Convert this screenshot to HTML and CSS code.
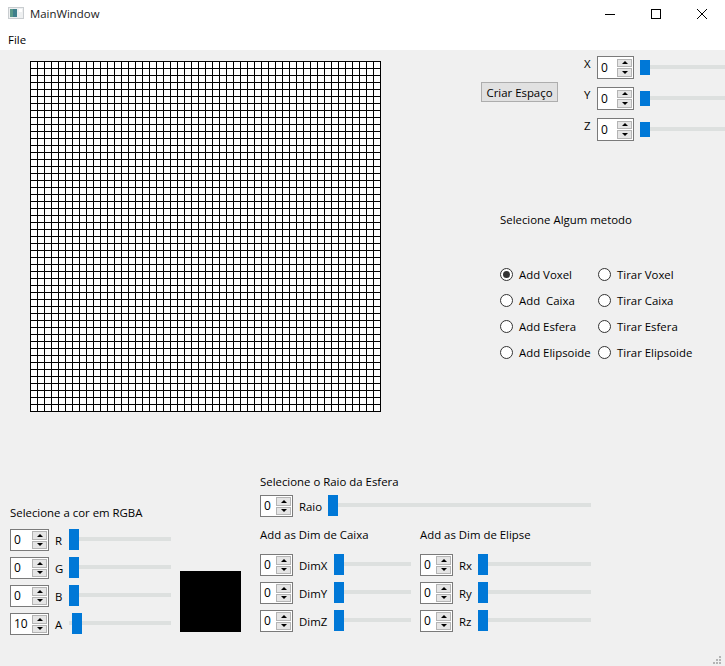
FILE: index.html
```html
<!DOCTYPE html>
<html>
<head>
  <title>MainWindow</title>
  <link rel="stylesheet" href="styles.css">
</head>
<body>
  <div class="window">
    <div class="titlebar">
      <svg class="app-icon" width="16" height="12" viewBox="0 0 16 12">
        <rect x="0" y="0" width="16" height="12" fill="#c9cdd0"/>
        <rect x="1" y="1" width="14" height="10" fill="#eef0f1"/>
        <rect x="2" y="2" width="7" height="8" fill="#3f7f8c"/>
        <rect x="2" y="2" width="3" height="8" fill="#5b9a8a"/>
        <rect x="11" y="2" width="3" height="3" fill="#fff"/>
      </svg>
      <span class="title">MainWindow</span>
      <div class="win-buttons">
        <svg width="12" height="12" viewBox="0 0 12 12"><path d="M1 6.5h10" stroke="#000" fill="none"/></svg>
        <svg width="12" height="12" viewBox="0 0 12 12"><rect x="1.5" y="1.5" width="9" height="9" stroke="#000" fill="none"/></svg>
        <svg width="12" height="12" viewBox="0 0 12 12"><path d="M1 1l10 10M11 1L1 11" stroke="#000" fill="none"/></svg>
      </div>
    </div>
    <div class="menubar"><span>File</span></div>

    <div class="content">
      <div class="upper">
        <div class="canvas"></div>
        <div class="side">
          <div class="space">
            <button class="btn">Criar Espaço</button>
            <div class="axes">
              <div class="axis">
                <span class="axis-label">X</span>
                <div class="spin spin-axis"><span class="val">0</span><span class="arrows"><i class="up"></i><i class="down"></i></span></div>
                <div class="slider slider-axis"><i class="thumb"></i></div>
              </div>
              <div class="axis">
                <span class="axis-label">Y</span>
                <div class="spin spin-axis"><span class="val">0</span><span class="arrows"><i class="up"></i><i class="down"></i></span></div>
                <div class="slider slider-axis"><i class="thumb"></i></div>
              </div>
              <div class="axis">
                <span class="axis-label">Z</span>
                <div class="spin spin-axis"><span class="val">0</span><span class="arrows"><i class="up"></i><i class="down"></i></span></div>
                <div class="slider slider-axis"><i class="thumb"></i></div>
              </div>
            </div>
          </div>
          <div class="methods">
            <p class="methods-title">Selecione Algum metodo</p>
            <div class="radios">
              <label class="radio"><i class="dot checked"></i>Add Voxel</label>
              <label class="radio"><i class="dot"></i>Tirar Voxel</label>
              <label class="radio"><i class="dot"></i>Add&nbsp; Caixa</label>
              <label class="radio"><i class="dot"></i>Tirar Caixa</label>
              <label class="radio"><i class="dot"></i>Add Esfera</label>
              <label class="radio"><i class="dot"></i>Tirar Esfera</label>
              <label class="radio"><i class="dot"></i>Add Elipsoide</label>
              <label class="radio"><i class="dot"></i>Tirar Elipsoide</label>
            </div>
          </div>
        </div>
      </div>

      <div class="lower">
        <div class="color-panel">
          <p class="heading">Selecione a cor em RGBA</p>
          <div class="color-body">
            <div class="rows">
              <div class="row">
                <div class="spin spin-color"><span class="val">0</span><span class="arrows"><i class="up"></i><i class="down"></i></span></div>
                <span class="row-label label-color">R</span>
                <div class="slider slider-color"><i class="thumb"></i></div>
              </div>
              <div class="row">
                <div class="spin spin-color"><span class="val">0</span><span class="arrows"><i class="up"></i><i class="down"></i></span></div>
                <span class="row-label label-color">G</span>
                <div class="slider slider-color"><i class="thumb"></i></div>
              </div>
              <div class="row">
                <div class="spin spin-color"><span class="val">0</span><span class="arrows"><i class="up"></i><i class="down"></i></span></div>
                <span class="row-label label-color">B</span>
                <div class="slider slider-color"><i class="thumb"></i></div>
              </div>
              <div class="row">
                <div class="spin spin-color"><span class="val">10</span><span class="arrows"><i class="up"></i><i class="down"></i></span></div>
                <span class="row-label label-color">A</span>
                <div class="slider slider-color"><i class="thumb thumb-alpha"></i></div>
              </div>
            </div>
            <div class="swatch"></div>
          </div>
        </div>

        <div class="shape-panel">
          <p class="heading">Selecione o Raio da Esfera</p>
          <div class="row row-raio">
            <div class="spin"><span class="val">0</span><span class="arrows"><i class="up"></i><i class="down"></i></span></div>
            <span class="row-label label-raio">Raio</span>
            <div class="slider slider-raio"><i class="thumb"></i></div>
          </div>
          <div class="dims">
            <div class="dim-group">
              <p class="heading">Add as Dim de Caixa</p>
              <div class="rows">
                <div class="row">
                  <div class="spin"><span class="val">0</span><span class="arrows"><i class="up"></i><i class="down"></i></span></div>
                  <span class="row-label label-dim">DimX</span>
                  <div class="slider slider-dim"><i class="thumb"></i></div>
                </div>
                <div class="row">
                  <div class="spin"><span class="val">0</span><span class="arrows"><i class="up"></i><i class="down"></i></span></div>
                  <span class="row-label label-dim">DimY</span>
                  <div class="slider slider-dim"><i class="thumb"></i></div>
                </div>
                <div class="row">
                  <div class="spin"><span class="val">0</span><span class="arrows"><i class="up"></i><i class="down"></i></span></div>
                  <span class="row-label label-dim">DimZ</span>
                  <div class="slider slider-dim"><i class="thumb"></i></div>
                </div>
              </div>
            </div>
            <div class="dim-group">
              <p class="heading">Add as Dim de Elipse</p>
              <div class="rows">
                <div class="row">
                  <div class="spin"><span class="val">0</span><span class="arrows"><i class="up"></i><i class="down"></i></span></div>
                  <span class="row-label label-el">Rx</span>
                  <div class="slider slider-el"><i class="thumb"></i></div>
                </div>
                <div class="row">
                  <div class="spin"><span class="val">0</span><span class="arrows"><i class="up"></i><i class="down"></i></span></div>
                  <span class="row-label label-el">Ry</span>
                  <div class="slider slider-el"><i class="thumb"></i></div>
                </div>
                <div class="row">
                  <div class="spin"><span class="val">0</span><span class="arrows"><i class="up"></i><i class="down"></i></span></div>
                  <span class="row-label label-el">Rz</span>
                  <div class="slider slider-el"><i class="thumb"></i></div>
                </div>
              </div>
            </div>
          </div>
        </div>
      </div>

      <svg class="grip" width="9" height="9" viewBox="0 0 9 9" fill="#b4b4b4">
        <rect x="6" y="0" width="2" height="2"/>
        <rect x="3" y="3" width="2" height="2"/>
        <rect x="6" y="3" width="2" height="2"/>
        <rect x="0" y="6" width="2" height="2"/>
        <rect x="3" y="6" width="2" height="2"/>
        <rect x="6" y="6" width="2" height="2"/>
      </svg>
    </div>
  </div>
</body>
</html>
```

FILE: styles.css
```css
* {
  box-sizing: border-box;
}
html, body {
  margin: 0;
  padding: 0;
}
body {
  font-family: "Open Sans", sans-serif;
  font-size: 11.4px;
  color: #000;
  background: #f0f0f0;
}
p {
  margin: 0;
}
.window {
  width: 725px;
  height: 666px;
  display: flex;
  flex-direction: column;
  overflow: hidden;
}

/* title bar and menu */
.titlebar {
  height: 30px;
  background: #fff;
  display: flex;
  align-items: center;
  padding-left: 8px;
}
.app-icon {
  margin-top: -4px;
}
.title {
  margin-left: 6px;
  margin-top: -3px;
  color: #1a1a1a;
}
.win-buttons {
  margin-left: auto;
  margin-right: 17px;
  margin-top: -3px;
  display: flex;
  gap: 34px;
}
.menubar {
  height: 20px;
  background: #fff;
  padding: 2px 0 0 8px;
}

.content {
  flex: 1;
  display: flex;
  flex-direction: column;
  position: relative;
}

/* top part */
.upper {
  height: 424px;
  display: flex;
  align-items: flex-start;
}
.canvas {
  width: 351px;
  height: 351px;
  margin: 11px 0 0 30px;
  background-color: #fff;
  background-image:
    linear-gradient(to right, #000 1px, transparent 1px),
    linear-gradient(to bottom, #000 1px, transparent 1px);
  background-size: 7px 7px;
}
.side {
  flex: 1;
  min-width: 0;
}
.space {
  display: flex;
  align-items: flex-start;
}
.btn {
  width: 77px;
  height: 20px;
  margin: 32px 0 0 100px;
  padding: 0;
  font: inherit;
  color: #000;
  background: #e1e1e1;
  border: 1px solid #adadad;
}
.axes {
  flex: 1;
  min-width: 0;
  margin-left: 26px;
  padding-top: 6px;
  display: flex;
  flex-direction: column;
  gap: 8px;
}
.axis {
  display: flex;
  align-items: flex-start;
}
.axis-label {
  width: 13px;
}

/* spin boxes */
.spin {
  width: 33px;
  height: 22px;
  flex: none;
  display: flex;
  justify-content: space-between;
  align-items: center;
  padding: 1px 1px 1px 3px;
  background: #fff;
  border: 1px solid #7a7a7a;
}
.spin-axis {
  width: 37px;
  height: 23px;
}
.spin-color {
  width: 39px;
}
.val {
  line-height: 1;
  font-size: 12px;
}
.arrows {
  width: 15px;
  height: 18px;
  display: flex;
  flex-direction: column;
  gap: 1px;
}
.arrows i {
  flex: 1;
  display: flex;
  align-items: center;
  justify-content: center;
  background: #e5e5e5;
  border: 1px solid #b4b4b4;
}
.arrows i::after {
  content: "";
  border-left: 3px solid transparent;
  border-right: 3px solid transparent;
}
.arrows .up::after {
  border-bottom: 3px solid #000;
}
.arrows .down::after {
  border-top: 3px solid #000;
}

/* sliders */
.slider {
  flex: none;
  align-self: flex-start;
  height: 21px;
  background: linear-gradient(#dde0df, #dde0df) 0 8px / 100% 4px no-repeat;
}
.thumb {
  display: block;
  width: 10px;
  height: 21px;
  background: #0078d7;
}
.slider-axis {
  flex: 1;
  height: 15px;
  margin: 4px 0 0 6px;
  background-position: 0 5px;
}
.slider-axis .thumb {
  height: 15px;
}
.slider-color {
  width: 102px;
}
.thumb-alpha {
  margin-left: 3px;
}
.slider-raio {
  width: 263px;
}
.slider-dim {
  width: 77px;
}
.slider-el {
  width: 113px;
}

/* radio buttons */
.methods {
  margin-top: 71px;
  padding-left: 119px;
}
.methods-title {
  height: 16px;
  line-height: 16px;
}
.radios {
  margin-top: 33px;
  display: grid;
  grid-template-columns: 98px 1fr;
  grid-auto-rows: 26px;
}
.radio {
  display: flex;
  align-items: center;
  gap: 6px;
  white-space: nowrap;
}
.dot {
  width: 13px;
  height: 13px;
  flex: none;
  display: flex;
  align-items: center;
  justify-content: center;
  background: #fff;
  border: 1px solid #333;
  border-radius: 50%;
}
.dot.checked::after {
  content: "";
  width: 7px;
  height: 7px;
  background: #333;
  border-radius: 50%;
}

/* bottom part */
.lower {
  display: flex;
  align-items: flex-start;
}
.heading {
  height: 16px;
  line-height: 16px;
}
.color-panel {
  width: 250px;
  margin: 31px 0 0 10px;
}
.color-body {
  display: flex;
  align-items: flex-end;
  margin-top: 8px;
}
.rows {
  display: flex;
  flex-direction: column;
  gap: 6px;
}
.row {
  display: flex;
  align-items: center;
  height: 22px;
}
.row-label {
  flex: none;
  margin-left: 6px;
}
.label-color {
  width: 14px;
}
.label-raio {
  width: 29px;
}
.label-dim {
  width: 35px;
}
.label-el {
  width: 19px;
}
.swatch {
  width: 61px;
  height: 61px;
  margin: 0 0 3px 9px;
  background: #000;
}
.shape-panel {
  flex: 1;
}
.row-raio {
  margin-top: 5px;
}
.dims {
  display: flex;
  margin-top: 10px;
}
.dim-group {
  flex: none;
  width: 160px;
}
.dim-group .rows {
  margin-top: 11px;
}

.grip {
  position: absolute;
  right: 3px;
  bottom: 1px;
}
```
